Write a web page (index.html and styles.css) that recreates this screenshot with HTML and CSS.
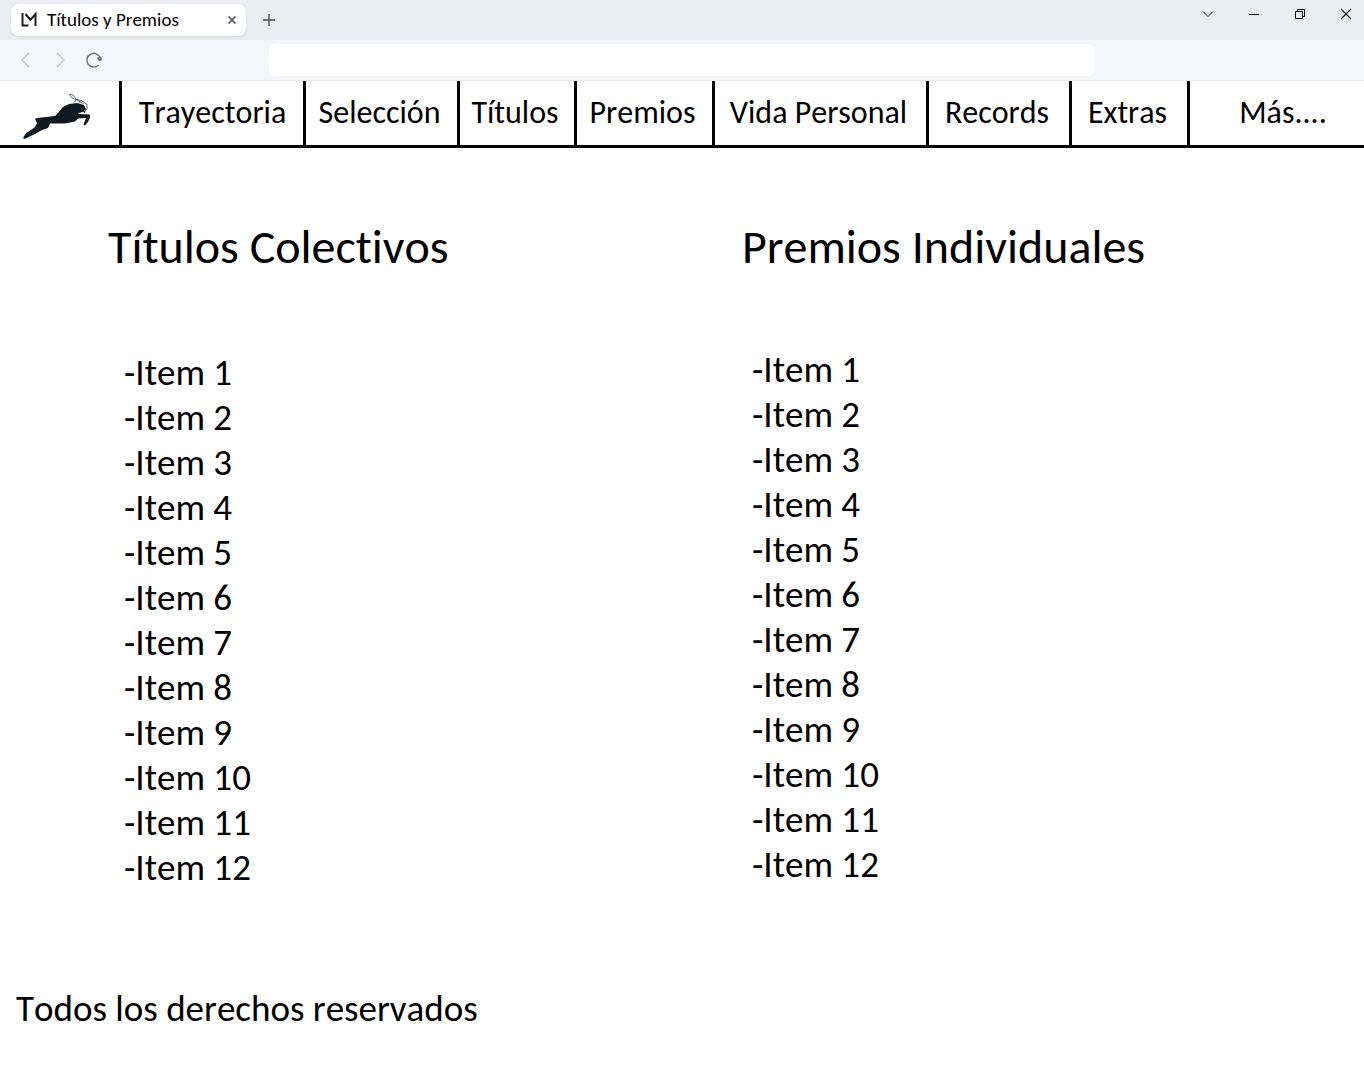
FILE: index.html
```html
<!DOCTYPE html>
<html lang="es">
<head>
<meta charset="utf-8">
<meta name="viewport" content="width=device-width, initial-scale=1">
<title>Títulos y Premios</title>
<link rel="stylesheet" href="styles.css">
</head>
<body>
<div class="browser">
  <div class="tab-bar">
    <div class="tab">
      <svg class="tab-icon" width="16" height="16" viewBox="0 0 16 16" aria-hidden="true"><path d="M1.500 1v12.500h6M4.500 2l5 6 5-6v12" fill="none" stroke="#1c1c1c" stroke-width="2"/></svg>
      <span class="tab-title">Títulos y Premios</span>
      <button class="tab-close" type="button" aria-label="Cerrar pestaña"><svg width="8" height="8" viewBox="0 0 8 8"><path d="M.5.5l7 7m0-7l-7 7" stroke="#454b54" stroke-width="1.500"/></svg></button>
    </div>
    <button class="tab-new" type="button" aria-label="Nueva pestaña"><svg width="12" height="12" viewBox="0 0 12 12"><path d="M6 0v12M0 6h12" stroke="#454b54" stroke-width="1.300"/></svg></button>
    <div class="window-controls">
      <button type="button" aria-label="Buscar pestañas"><svg width="12" height="12" viewBox="0 0 12 12"><path d="M1 3.500l5 5 5-5" fill="none" stroke="#222"/></svg></button>
      <button type="button" aria-label="Minimizar"><svg width="12" height="12" viewBox="0 0 12 12"><path d="M1 6.500h10" stroke="#000"/></svg></button>
      <button type="button" aria-label="Restaurar"><svg width="12" height="12" viewBox="0 0 12 12"><path d="M1.500 3.500h7v7h-7zM3.500 3.500v-2h7v7h-2" fill="none" stroke="#000"/></svg></button>
      <button type="button" aria-label="Cerrar"><svg width="12" height="12" viewBox="0 0 12 12"><path d="M1 1l10 10m0-10L1 11" stroke="#111" stroke-width="1.200"/></svg></button>
    </div>
  </div>
  <div class="toolbar">
    <div class="history">
      <button type="button" aria-label="Atrás"><svg width="18" height="18" viewBox="0 0 18 18"><path d="M12 2L5 9l7 7" fill="none" stroke="#bfc3ca" stroke-width="1.300"/></svg></button>
      <button type="button" aria-label="Adelante"><svg width="18" height="18" viewBox="0 0 18 18"><path d="M6 2l7 7-7 7" fill="none" stroke="#bfc3ca" stroke-width="1.300"/></svg></button>
      <button type="button" aria-label="Recargar"><svg width="18" height="18" viewBox="0 0 18 18"><path d="M13.500 14.200A6.900 6.900 0 1 1 15.300 7" fill="none" stroke="#687282" stroke-width="1.400"/><path d="M12 7l3-2 2 2.500-1 2.500-2.500-.5z" fill="#687282"/></svg></button>
    </div>
    <input class="address" type="text" aria-label="Dirección">
  </div>
</div>
<header>
  <nav class="site-nav" aria-label="Principal">
    <a class="logo" href="#" aria-label="Inicio">
      <svg width="68" height="46" viewBox="0 0 68 46"><path fill="#101820" d="M0 45l3-5 5-3 4-3 2-4-2-4 2-1 18-2 3-3 5-6 6-3 8-1 7 2 2 4-1 4-2-1-5 1 1 1 11 .5v3l-2 4.500-3 3.500-1.500-1 1.500-4 1-2.500-8 .5-3 3-10 2H27l-2 4.500-6 2-7 4L1.500 46z"/><path d="M46 1l4 1 3 4 6 2 5 3.500M46 1l3 4 5 2 7 4M53 6l-1 3M57 7l-1 3M64 11v5l-3 2" fill="none" stroke="#6b727a"/></svg>
    </a>
    <a class="first" href="#">Trayectoria</a>
    <a href="#">Selección</a>
    <a href="#">Títulos</a>
    <a href="#">Premios</a>
    <a href="#">Vida Personal</a>
    <a href="#">Records</a>
    <a href="#">Extras</a>
    <a class="more" href="#">Más....</a>
  </nav>
</header>
<main class="lists">
  <section class="team">
    <h1>Títulos Colectivos</h1>
    <ul>
      <li>-Item 1</li><li>-Item 2</li><li>-Item 3</li><li>-Item 4</li>
      <li>-Item 5</li><li>-Item 6</li><li>-Item 7</li><li>-Item 8</li>
      <li>-Item 9</li><li>-Item 10</li><li>-Item 11</li><li>-Item 12</li>
    </ul>
  </section>
  <section class="individual">
    <h1>Premios Individuales</h1>
    <ul>
      <li>-Item 1</li><li>-Item 2</li><li>-Item 3</li><li>-Item 4</li>
      <li>-Item 5</li><li>-Item 6</li><li>-Item 7</li><li>-Item 8</li>
      <li>-Item 9</li><li>-Item 10</li><li>-Item 11</li><li>-Item 12</li>
    </ul>
  </section>
</main>
<footer>Todos los derechos reservados</footer>
</body>
</html>
```
FILE: styles.css
```css
* { box-sizing: border-box; }

body {
  margin: 0;
  background: #fff;
  color: #000;
  font-family: Carlito, Calibri, Lato, sans-serif;
  font-kerning: none;
  font-variant-ligatures: none;
}

button {
  display: grid;
  place-items: center;
  padding: 0;
  border: 0;
  background: none;
}

.tab-bar {
  display: flex;
  align-items: flex-start;
  height: 40px;
  padding: 4px 0 0 11px;
  background: #ecedf1;
}

.tab {
  display: flex;
  align-items: center;
  width: 235px;
  height: 32px;
  padding: 0 8px 0 10px;
  border-radius: 8px;
  background: #fff;
  box-shadow: 0 1px 3px #0000001a;
}

.tab-title {
  flex: 1;
  margin-left: 10px;
  font-size: 19px;
  line-height: 24px;
}

.tab-close { width: 12px; height: 24px; }
.tab-new { width: 46px; height: 32px; }

.window-controls {
  display: flex;
  gap: 10px;
  margin-left: auto;
}

.window-controls button { width: 36px; height: 20px; }

.toolbar {
  display: grid;
  grid-template-columns: 269fr 826fr 269fr;
  align-items: center;
  height: 41px;
  border-bottom: 1px solid #e9ebef;
  background: #f5f6f9;
}

.history {
  display: flex;
  gap: 16px;
  padding-left: 17px;
}

.address {
  width: 100%;
  height: 32px;
  padding: 0 12px;
  border: 0;
  border-radius: 8px;
  background: #fff;
}

.site-nav {
  display: grid;
  grid-template-columns: 122fr 184fr 154fr 117fr 138fr 214fr 143fr 118fr 174fr;
  border-bottom: 3px solid #000;
}

.site-nav a {
  display: flex;
  align-items: center;
  justify-content: center;
  height: 64px;
  padding-right: 4px;
  border-right: 3px solid #000;
  color: inherit;
  font-size: 32px;
  line-height: 36px;
  text-decoration: none;
  white-space: nowrap;
}

.site-nav .logo { padding: 6px 6px 0 0; }
.site-nav .first { padding: 0; }
.site-nav .more { padding: 0 0 0 12px; border-right: 0; }

.lists {
  display: grid;
  grid-template-columns: 634fr 622fr;
  padding: 72px 0 0 108px;
}

h1 {
  margin: 0;
  font-size: 48px;
  font-weight: 400;
  line-height: 54px;
}

ul {
  margin: 0;
  padding: 76px 0 0 16px;
  list-style: none;
  font-size: 37px;
  line-height: 45px;
}

.individual ul { padding: 73px 0 0 10px; }

footer {
  padding: 96px 16px 40px;
  font-size: 37px;
  line-height: 45px;
}
```
